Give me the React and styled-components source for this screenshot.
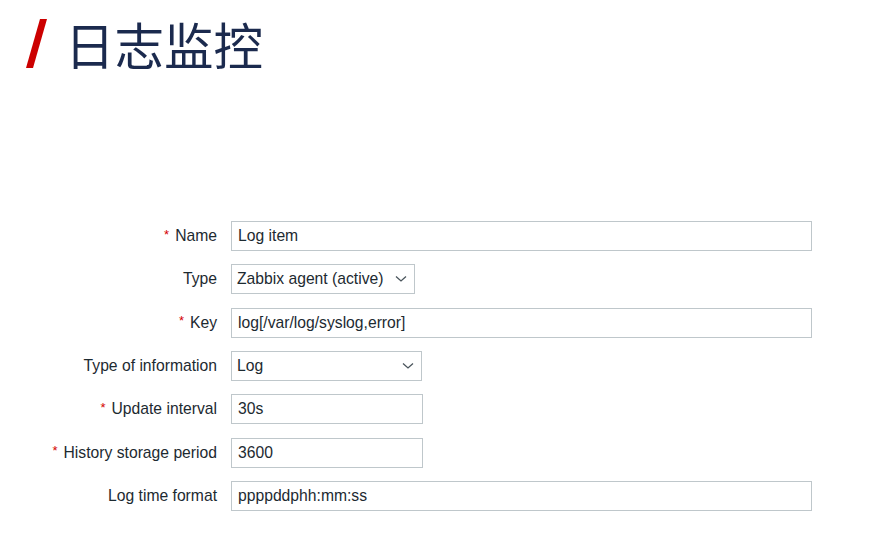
import styled, { createGlobalStyle } from "styled-components";

const GlobalStyle = createGlobalStyle`
  html, body {
    margin: 0;
    padding: 0;
    background: #ffffff;
  }
  body {
    font-family: "Liberation Sans", Arial, sans-serif;
    color: #1f2c33;
  }
`;

const Page = styled.div`
  width: 883px;
  height: 550px;
  overflow: hidden;
  background: #ffffff;
`;

const Header = styled.header`
  display: flex;
  align-items: center;
  gap: 18px;
  padding: 19px 0 0 26px;
  height: 50px;
`;

const Slash = styled.svg`
  width: 21px;
  height: 50px;
  flex-shrink: 0;
`;

const Title = styled.h1`
  margin: 0;
  font-family: "Noto Sans CJK SC", "Noto Sans", sans-serif;
  font-weight: 400;
  font-size: 49.5px;
  line-height: 50px;
  color: #1b2a4e;
`;

const Form = styled.form`
  display: grid;
  grid-template-columns: 217px 1fr;
  column-gap: 14px;
  row-gap: 13.33px;
  margin-top: 152px;
  width: 812px;
  font-size: 15.7px;
`;

const Label = styled.label`
  display: flex;
  align-items: center;
  justify-content: flex-end;
  gap: 6px;
  height: 30px;
  white-space: nowrap;
  color: #1d2a31;
`;

const Required = styled.span`
  color: #d40000;
  font-size: 13px;
  position: relative;
  top: -2px;
`;

const Field = styled.div`
  display: flex;
  align-items: center;
  height: 30px;
`;

const TextInput = styled.input`
  box-sizing: border-box;
  width: ${(p) => p.$w}px;
  height: 30px;
  padding: 0 6px;
  border: 1px solid #bfc7cb;
  border-radius: 0;
  background: #ffffff;
  font-family: "Liberation Sans", Arial, sans-serif;
  font-size: 15.7px;
  color: #1d2a31;
  outline: none;
`;

const Select = styled.div`
  box-sizing: border-box;
  width: ${(p) => p.$w}px;
  height: 30px;
  display: flex;
  align-items: center;
  justify-content: space-between;
  padding: 0 7px 0 5px;
  border: 1px solid #bfc7cb;
  background: #ffffff;
  color: #1d2a31;

  svg {
    width: 12px;
    height: 8px;
    flex-shrink: 0;
  }
`;

const rows = [
  { label: "Name", req: true, kind: "input", value: "Log item", w: 581 },
  { label: "Type", kind: "select", value: "Zabbix agent (active)", w: 184 },
  { label: "Key", req: true, kind: "input", value: "log[/var/log/syslog,error]", w: 581 },
  { label: "Type of information", kind: "select", value: "Log", w: 191 },
  { label: "Update interval", req: true, kind: "input", value: "30s", w: 192 },
  { label: "History storage period", req: true, kind: "input", value: "3600", w: 192 },
  { label: "Log time format", kind: "input", value: "ppppddphh:mm:ss", w: 581 },
];

const Chevron = () => (
  <svg viewBox="0 0 12 8">
    <path d="M1 1.5 L6 6 L11 1.5" fill="none" stroke="#4a555c" strokeWidth="1.3" />
  </svg>
);

export default function App() {
  return (
    <Page>
      <GlobalStyle />
      <Header>
        <Slash viewBox="0 0 21 50">
          <polygon points="14,0 21,0 7,49 0,49" fill="#cc0000" />
        </Slash>
        <Title>日志监控</Title>
      </Header>
      <Form>
        {rows.map((r) => [
          <Label key={r.label + "-l"}>
            {r.req && <Required>*</Required>}
            {r.label}
          </Label>,
          <Field key={r.label + "-f"}>
            {r.kind === "input" ? (
              <TextInput $w={r.w} defaultValue={r.value} readOnly />
            ) : (
              <Select $w={r.w}>
                <span>{r.value}</span>
                <Chevron />
              </Select>
            )}
          </Field>,
        ])}
      </Form>
    </Page>
  );
}
